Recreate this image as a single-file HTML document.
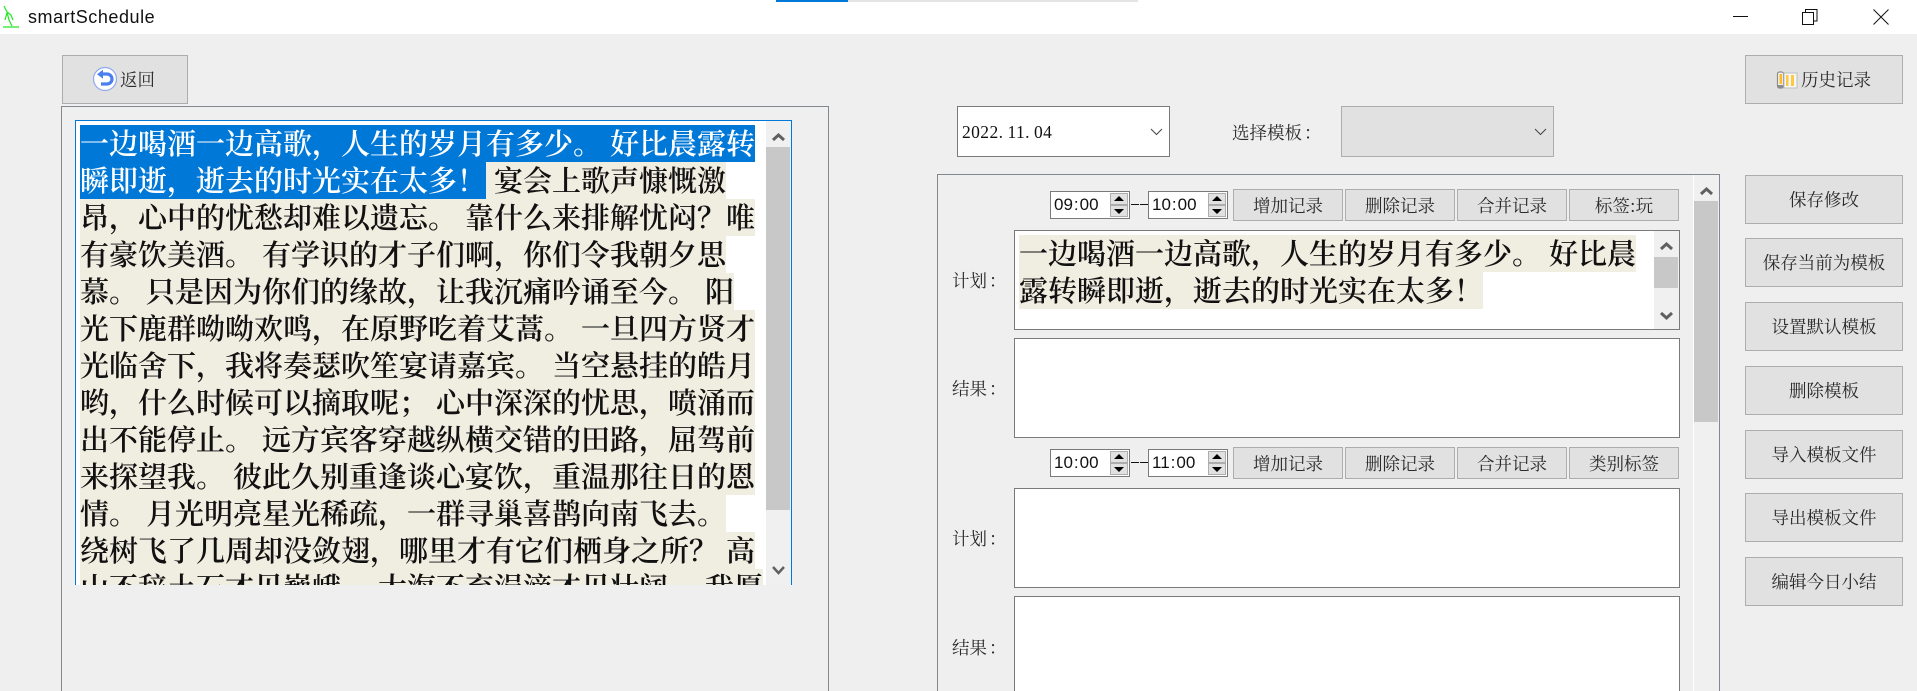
<!DOCTYPE html>
<html lang="zh-CN">
<head>
<meta charset="utf-8">
<title>smartSchedule</title>
<style>
html,body{margin:0;padding:0;width:1917px;height:691px;overflow:hidden;background:#efefef}
body{position:relative;font-family:"Liberation Serif","Noto Serif CJK SC",serif;color:#2a2a2a;text-spacing-trim:space-all}
div,svg{position:absolute;box-sizing:border-box}
.btn{background:#e1e1e1;border:1px solid #adadad;display:flex;align-items:center;justify-content:center;font-size:17.5px;white-space:nowrap;font-family:"Noto Serif CJK SC",serif}
.sm{height:32px;width:110px;top:189px}
.rb{left:1745px;width:158px;height:49px}
.tb{background:#fff;border:1px solid #7a7a7a;left:1014px;width:666px}
.lab{left:952px;font-size:17.5px;line-height:22px;white-space:nowrap;font-family:"Noto Serif CJK SC",serif}
.lab span{position:relative;left:2px;top:0}
.frame{border:1px solid #828790;border-bottom:none}
.ln{left:5px;height:37px;line-height:36px;font-family:"Noto Serif CJK SC",serif;font-size:29px;font-weight:600;color:#111;white-space:nowrap;background:#f0ede1}
.ln i{display:inline-block;width:8px;font-style:normal}
.sel{background:#0078d7;color:#fff}
.spin{background:#fff;border:1px solid #7a7a7a;width:80px;height:28px;font-family:"Liberation Sans",sans-serif;font-size:17px;line-height:26px;padding-left:3px;color:#111}
.spin b{font-weight:400;margin:0 1px}
.sb{background:#e1e1e1;border:1px solid #adadad;left:60px;width:18px}
.track{background:#f0f0f0}
.thumb{background:#c8c8c8}
.dash{height:1px;background:#111;width:8px}
</style>
</head>
<body>
<!-- title bar -->
<div style="left:0;top:0;width:1917px;height:34px;background:#fff"></div>
<div style="left:776px;top:0;width:72px;height:2px;background:#0078d7"></div>
<div style="left:848px;top:0;width:290px;height:2px;background:#e4e4e4"></div>
<svg style="left:2px;top:5px" width="18" height="24" viewBox="0 0 18 24" fill="none" stroke="#22e822" stroke-width="1.2">
<path d="M2 1l3 6 2 8 3 6M5 7l4 3 2 5M5 8L3 15M1 22h16"/>
</svg>
<div style="left:28px;top:6px;font-family:'Liberation Sans',sans-serif;font-size:18px;line-height:23px;color:#111;letter-spacing:.55px;white-space:nowrap">smartSchedule</div>
<svg style="left:1730px;top:5px" width="165" height="24" viewBox="0 0 165 24" fill="none" stroke="#111" stroke-width="1">
<path d="M3 11.5h15"/>
<path d="M72.5 7.5h11v12h-11zM75.5 7.5v-3h11.5v11.5h-3.500"/>
<path d="M143.500 4.500l15 15M158.500 4.500l-15 15"/>
</svg>

<!-- top left button -->
<div class="btn" style="left:62px;top:55px;width:126px;height:49px;padding-left:0">
<span style="margin-left:25px">返回</span>
</div>
<svg style="left:92px;top:66px" width="26" height="26" viewBox="0 0 26 26">
<circle cx="13" cy="13" r="11.500" fill="#fff" stroke="#8ea8f0" stroke-width="1.200"/>
<path d="M10 8h5a5 5 0 0 1 0 10H9" fill="none" stroke="#4a80ee" stroke-width="3.200"/>
<path d="M5 8.200l6-4.500v9z" fill="#4a80ee"/>
</svg>

<!-- left panel -->
<div class="frame" style="left:61px;top:106px;width:768px;height:585px"></div>
<div style="left:75px;top:120px;width:717px;height:465px;background:#fff;border:1px solid #0078d7;border-bottom:none;overflow:hidden">
  <div class="ln sel" style="left:4px;top:4px">一边喝酒一边高歌，人生的岁月有多少。<i></i>好比晨露转</div>
  <div class="ln sel" style="left:4px;top:41px;width:406px">瞬即逝，逝去的时光实在太多！</div>
  <div class="ln" style="left:410px;top:41px"><i></i>宴会上歌声慷慨激</div>
  <div class="ln" style="left:4px;top:78px">昂，心中的忧愁却难以遗忘。<i></i>靠什么来排解忧闷？唯</div>
  <div class="ln" style="left:4px;top:115px">有豪饮美酒。<i></i>有学识的才子们啊，你们令我朝夕思</div>
  <div class="ln" style="left:4px;top:152px">慕。<i></i>只是因为你们的缘故，让我沉痛吟诵至今。<i></i>阳</div>
  <div class="ln" style="left:4px;top:189px">光下鹿群呦呦欢鸣，在原野吃着艾蒿。<i></i>一旦四方贤才</div>
  <div class="ln" style="left:4px;top:226px">光临舍下，我将奏瑟吹笙宴请嘉宾。<i></i>当空悬挂的皓月</div>
  <div class="ln" style="left:4px;top:263px">哟，什么时候可以摘取呢；<i></i>心中深深的忧思，喷涌而</div>
  <div class="ln" style="left:4px;top:300px">出不能停止。<i></i>远方宾客穿越纵横交错的田路，屈驾前</div>
  <div class="ln" style="left:4px;top:337px">来探望我。<i></i>彼此久别重逢谈心宴饮，重温那往日的恩</div>
  <div class="ln" style="left:4px;top:374px">情。<i></i>月光明亮星光稀疏，一群寻巢喜鹊向南飞去。</div>
  <div class="ln" style="left:4px;top:411px">绕树飞了几周却没敛翅，哪里才有它们栖身之所？<i></i>高</div>
  <div class="ln" style="left:4px;top:448px">山不辞土石才见巍峨，<i></i>大海不弃涓滴才见壮阔。<i></i>我愿</div>
  <div class="track" style="left:690px;top:0;width:25px;height:465px"></div>
  <div class="thumb" style="left:690px;top:26px;width:24px;height:363px"></div>
  <svg style="left:690px;top:0" width="25" height="30" viewBox="0 0 25 30" fill="none" stroke="#606060" stroke-width="3"><path d="M7 19l5.500-5 5.500 5"/></svg>
  <svg style="left:690px;top:440px" width="25" height="25" viewBox="0 0 25 25" fill="none" stroke="#606060" stroke-width="2.500"><path d="M7 6l5.500 6 5.500-6"/></svg>
</div>

<!-- date + template -->
<div style="left:957px;top:106px;width:213px;height:51px;background:#fff;border:1px solid #7a7a7a"></div>
<div style="left:962px;top:120px;font-family:'Liberation Serif',serif;font-size:17.5px;line-height:24px;letter-spacing:.4px;color:#111;white-space:nowrap">2022<span style="letter-spacing:4.500px">.</span>11<span style="letter-spacing:4.500px">.</span>04</div>
<svg style="left:1150px;top:127px" width="13" height="10" viewBox="0 0 13 10" fill="none" stroke="#444" stroke-width="1"><path d="M1 2l5.500 5.500L12 2"/></svg>
<div class="lab" style="left:1232px;top:122px">选择模板<span>：</span></div>
<div style="left:1341px;top:106px;width:213px;height:51px;background:#e1e1e1;border:1px solid #adadad"></div>
<svg style="left:1534px;top:127px" width="13" height="10" viewBox="0 0 13 10" fill="none" stroke="#444" stroke-width="1"><path d="M1 2l5.500 5.500L12 2"/></svg>

<!-- history -->
<div class="btn" style="left:1745px;top:55px;width:158px;height:49px;padding-left:24px">历史记录</div>
<svg style="left:1776px;top:70px" width="22" height="20" viewBox="0 0 22 20">
<rect x="1.500" y="2" width="6" height="16" rx="2" fill="#f5f5f5" stroke="#8c8c8c" stroke-width="1.200"/>
<rect x="3.500" y="4" width="2.500" height="10" fill="#fdbb22"/>
<rect x="8" y="3" width="13" height="15" fill="#f7f7f7" stroke="#bdbdbd"/>
<rect x="10" y="5" width="2.500" height="11" fill="#fdc842"/>
<rect x="15" y="5" width="3" height="11" fill="#fdc842"/>
<rect x="2" y="15" width="5" height="3" fill="#8c8c8c"/>
</svg>

<!-- right panel -->
<div class="frame" style="left:937px;top:174px;width:783px;height:517px"></div>
<div class="track" style="left:1693px;top:175px;width:26px;height:516px;border-left:1px solid #fff"></div>
<div class="thumb" style="left:1694px;top:201px;width:24px;height:221px"></div>
<svg style="left:1694px;top:175px" width="24" height="26" viewBox="0 0 24 26" fill="none" stroke="#606060" stroke-width="3"><path d="M7 19l5.500-5 5.500 5"/></svg>

<!-- row 1 -->
<div class="spin" style="left:1050px;top:191px">09<b>:</b>00</div>
<div class="sb" style="left:1110px;top:193px;height:12px"></div>
<div class="sb" style="left:1110px;top:205px;height:12px"></div>
<svg style="left:1110px;top:193px" width="18" height="24" viewBox="0 0 18 24" fill="#000"><path d="M4 8l5-5 5 5zM4 16h10l-5 5z"/></svg>
<div class="dash" style="left:1131px;top:204px"></div><div class="dash" style="left:1140px;top:204px"></div>
<div class="spin" style="left:1148px;top:191px">10<b>:</b>00</div>
<div class="sb" style="left:1208px;top:193px;height:12px"></div>
<div class="sb" style="left:1208px;top:205px;height:12px"></div>
<svg style="left:1208px;top:193px" width="18" height="24" viewBox="0 0 18 24" fill="#000"><path d="M4 8l5-5 5 5zM4 16h10l-5 5z"/></svg>
<div class="btn sm" style="left:1233px">增加记录</div>
<div class="btn sm" style="left:1345px">删除记录</div>
<div class="btn sm" style="left:1457px">合并记录</div>
<div class="btn sm" style="left:1569px">标签:玩</div>

<div class="lab" style="top:270px">计划<span>：</span></div>
<div class="tb" style="top:230px;height:100px;overflow:hidden">
  <div class="ln" style="left:4px;top:4px">一边喝酒一边高歌，人生的岁月有多少。<i></i>好比晨</div>
  <div class="ln" style="left:4px;top:41px">露转瞬即逝，逝去的时光实在太多！</div>
  <div class="track" style="left:639px;top:0;width:25px;height:98px"></div>
  <div class="thumb" style="left:639px;top:26px;width:24px;height:31px"></div>
  <svg style="left:639px;top:0" width="24" height="26" viewBox="0 0 24 26" fill="none" stroke="#606060" stroke-width="3"><path d="M7 18l5.500-5 5.500 5"/></svg>
  <svg style="left:639px;top:72px" width="24" height="26" viewBox="0 0 24 26" fill="none" stroke="#606060" stroke-width="3"><path d="M7 10l5.500 5 5.500-5"/></svg>
</div>
<div class="lab" style="top:378px">结果<span>：</span></div>
<div class="tb" style="top:338px;height:100px"></div>

<!-- row 2 -->
<div class="spin" style="left:1050px;top:449px">10<b>:</b>00</div>
<div class="sb" style="left:1110px;top:451px;height:12px"></div>
<div class="sb" style="left:1110px;top:463px;height:12px"></div>
<svg style="left:1110px;top:451px" width="18" height="24" viewBox="0 0 18 24" fill="#000"><path d="M4 8l5-5 5 5zM4 16h10l-5 5z"/></svg>
<div class="dash" style="left:1131px;top:462px"></div><div class="dash" style="left:1140px;top:462px"></div>
<div class="spin" style="left:1148px;top:449px">11<b>:</b>00</div>
<div class="sb" style="left:1208px;top:451px;height:12px"></div>
<div class="sb" style="left:1208px;top:463px;height:12px"></div>
<svg style="left:1208px;top:451px" width="18" height="24" viewBox="0 0 18 24" fill="#000"><path d="M4 8l5-5 5 5zM4 16h10l-5 5z"/></svg>
<div class="btn sm" style="left:1233px;top:447px">增加记录</div>
<div class="btn sm" style="left:1345px;top:447px">删除记录</div>
<div class="btn sm" style="left:1457px;top:447px">合并记录</div>
<div class="btn sm" style="left:1569px;top:447px">类别标签</div>

<div class="lab" style="top:528px">计划<span>：</span></div>
<div class="tb" style="top:488px;height:100px"></div>
<div class="lab" style="top:637px">结果<span>：</span></div>
<div class="tb" style="top:596px;height:100px"></div>

<!-- right buttons -->
<div class="btn rb" style="top:175px">保存修改</div>
<div class="btn rb" style="top:238px">保存当前为模板</div>
<div class="btn rb" style="top:302px">设置默认模板</div>
<div class="btn rb" style="top:366px">删除模板</div>
<div class="btn rb" style="top:430px">导入模板文件</div>
<div class="btn rb" style="top:493px">导出模板文件</div>
<div class="btn rb" style="top:557px">编辑今日小结</div>
</body>
</html>
